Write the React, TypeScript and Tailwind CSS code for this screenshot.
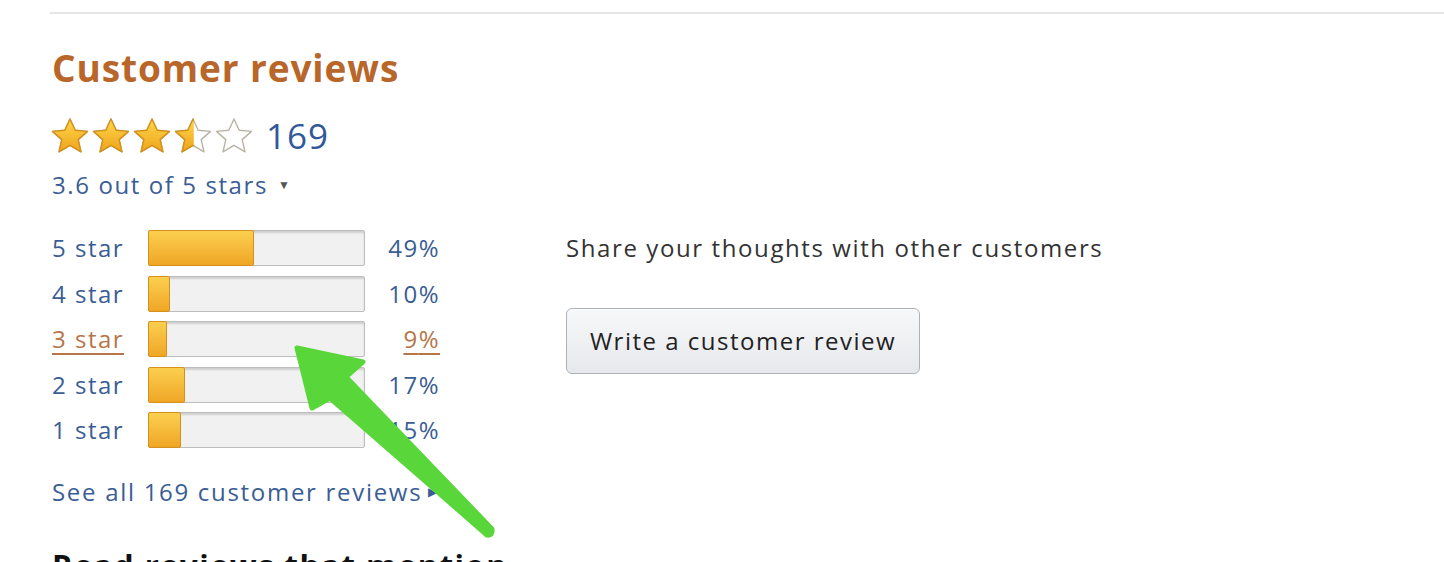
import React from "react";

const rows = [
  { label: "5 star", pct: 49, fill: 105, hover: false },
  { label: "4 star", pct: 10, fill: 21, hover: false },
  { label: "3 star", pct: 9, fill: 18, hover: true },
  { label: "2 star", pct: 17, fill: 36, hover: false },
  { label: "1 star", pct: 15, fill: 32, hover: false },
];

function Star({ fill }: { fill: number }) {
  const id = `g${Math.round(fill * 100)}`;
  return (
    <svg width="40" height="38" viewBox="0 0 40 38">
      <defs>
        <linearGradient id={id + "f"} x1="0" y1="0" x2="0" y2="1">
          <stop offset="0" stopColor="#ffd54a" />
          <stop offset="1" stopColor="#eea51c" />
        </linearGradient>
        <clipPath id={id + "c"}>
          <rect x="0" y="0" width={40 * fill} height="38" />
        </clipPath>
      </defs>
      <path
        d="M20 2 L25.2 13.2 L37.5 14.4 L28.2 22.6 L31 34.8 L20 28.4 L9 34.8 L11.8 22.6 L2.5 14.4 L14.8 13.2 Z"
        fill="#fff"
        stroke="#b9b3a6"
        strokeWidth="1.4"
        strokeLinejoin="round"
      />
      <g clipPath={`url(#${id}c)`}>
        <path
          d="M20 2 L25.2 13.2 L37.5 14.4 L28.2 22.6 L31 34.8 L20 28.4 L9 34.8 L11.8 22.6 L2.5 14.4 L14.8 13.2 Z"
          fill={`url(#${id}f)`}
          stroke="#d3901a"
          strokeWidth="1.4"
          strokeLinejoin="round"
        />
      </g>
    </svg>
  );
}

export default function App() {
  return (
    <div
      className="relative w-[1444px] h-[562px] overflow-hidden bg-white"
      style={{ fontFamily: "'Open Sans', 'Liberation Sans', sans-serif" }}
    >
      <div className="ml-[50px] mt-[12px] h-[2px] bg-[#e6e6e6]" />
      <div className="pl-[52px]">
        <h2 className="mt-[30px] text-[37px] leading-[48px] font-bold text-[#b8662a] tracking-[0.9px]">
          Customer reviews
        </h2>
        <div className="mt-[23px] flex items-center h-[42px]">
          <div className="flex -ml-[2px] gap-[1px]">
            <Star fill={1} />
            <Star fill={1} />
            <Star fill={1} />
            <Star fill={0.52} />
            <Star fill={0} />
          </div>
          <span className="ml-[12px] text-[35px] leading-[42px] text-[#30589a] tracking-[1px]">169</span>
        </div>
        <div className="mt-[12px] flex items-center text-[24px] leading-[32px] text-[#3a5d94] tracking-[1.6px]">
          3.6 out of 5 stars
          <span className="ml-[10px] text-[#555] text-[12px] leading-none">▼</span>
        </div>
        <div className="mt-[29px] flex">
          <div className="flex flex-col gap-[9.5px]">
            {rows.map((r) => (
              <div key={r.label} className="flex items-center h-[36px]">
                <span
                  className={
                    "w-[96px] text-[24px] leading-[32px] tracking-[1.5px] " +
                    (r.hover
                      ? "text-[#b6754a] underline decoration-[1.5px] underline-offset-[5px]"
                      : "text-[#3a5d94]")
                  }
                >
                  {r.label}
                </span>
                <div className="relative w-[217px] h-[36px] rounded-[2px] border border-[#bdbdbd] bg-[#f1f1f1] shadow-[inset_0_2px_2px_rgba(0,0,0,0.14)]">
                  <div
                    className="absolute -left-px -top-px -bottom-px rounded-[2px] border border-[#d4911c] bg-gradient-to-b from-[#fbcf4e] to-[#f0a624]"
                    style={{ width: r.fill + 1 }}
                  />
                </div>
                <span
                  className={
                    "w-[75px] text-right text-[24px] leading-[32px] tracking-[1.5px] " +
                    (r.hover
                      ? "text-[#b6754a] underline decoration-[1.5px] underline-offset-[5px]"
                      : "text-[#3a5d94]")
                  }
                >
                  {r.pct}%
                </span>
              </div>
            ))}
          </div>
          <div className="ml-[126px] flex flex-col items-start">
            <div className="h-[36px] flex items-center text-[24px] text-[#333] tracking-[1.6px]">
              Share your thoughts with other customers
            </div>
            <button className="mt-[42px] w-[354px] h-[66px] rounded-[6px] border border-[#adb1b8] bg-gradient-to-b from-[#f7f8fa] to-[#e6e8eb] text-[24px] text-[#222] tracking-[1.5px] shadow-[0_1px_0_rgba(255,255,255,0.6)_inset]">
              Write a customer review
            </button>
          </div>
        </div>
        <div className="mt-[28px] flex items-center text-[24px] leading-[32px] text-[#3a5d94] tracking-[1.7px]">
          See all 169 customer reviews
          <span className="ml-[6px] text-[12px] text-[#3a5d94]">▶</span>
        </div>
        <h3 className="mt-[37px] text-[31px] leading-[40px] font-bold text-[#111] tracking-[1.5px]">
          Read reviews that mention
        </h3>
      </div>
      <svg
        className="absolute left-0 top-0 pointer-events-none"
        width="1444"
        height="562"
        viewBox="0 0 1444 562"
      >
        <path
          d="M297 348 L363 362 L346 377 L492 529 Q493 536 487 535 L330 398 L312 408 Z"
          fill="#58d63a"
          stroke="#58d63a"
          strokeWidth="5"
          strokeLinejoin="round"
        />
      </svg>
    </div>
  );
}
